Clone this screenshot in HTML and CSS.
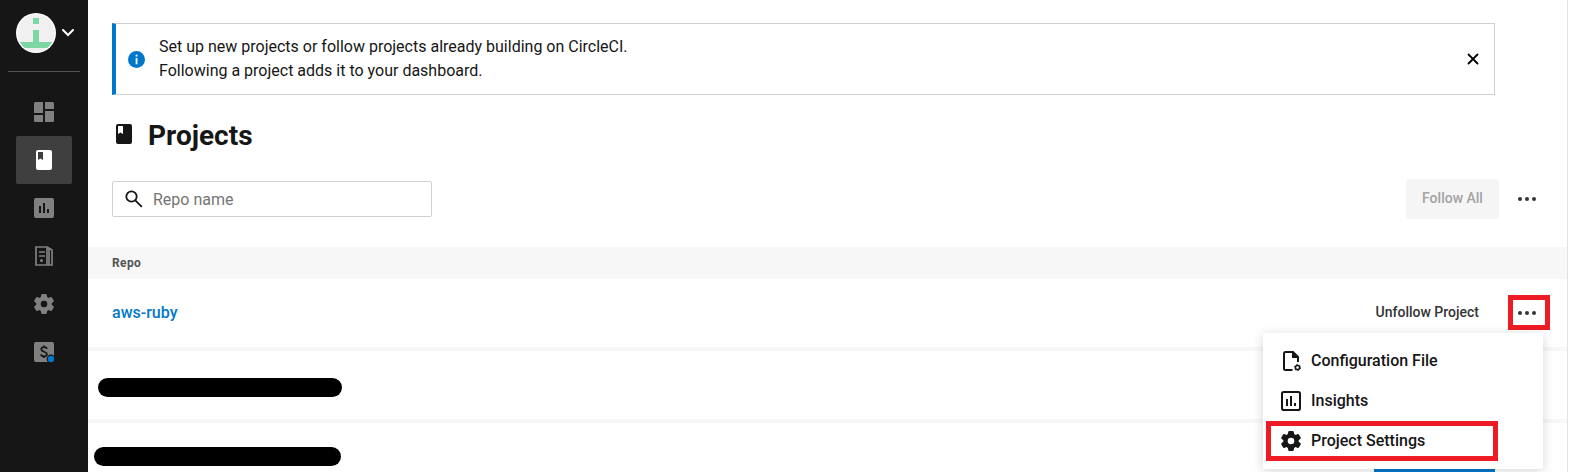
FILE: index.html
```html
<!DOCTYPE html>
<html lang="en">
<head>
<meta charset="utf-8">
<title>Projects</title>
<link rel="stylesheet" href="styles.css">
</head>
<body>
<div class="app">
  <nav class="sidebar">
    <div class="org">
      <svg class="avatar" viewBox="0 0 40 40"><defs><clipPath id="round"><circle cx="20" cy="20" r="18.6"/></clipPath></defs><circle cx="20" cy="20" r="20" fill="#fff"/><g clip-path="url(#round)"><path fill="#f0f0f0" d="M0 0h40v40H0z"/><path fill="#7dd7a3" d="M17 5h6v6h-6zM17 17h6v12h14v6H3v-6h14z"/></g></svg>
      <svg class="chevron" viewBox="0 0 12 8"><path d="M1 1l5 5 5-5" fill="none" stroke="#fff" stroke-width="2" stroke-linecap="round"/></svg>
    </div>
    <div class="rule"></div>
    <div class="nav-items">
      <a class="nav-item"><svg class="icon" viewBox="0 0 24 24"><path d="M3.500 2H11v11H2V3.500A1.500 1.500 0 0 1 3.500 2zM13 2h7.500A1.500 1.500 0 0 1 22 3.500V9h-9zM13 11h9v9.500a1.500 1.500 0 0 1-1.500 1.500H13zM2 15h9v7H3.500A1.500 1.500 0 0 1 2 20.500z"/></svg></a>
      <a class="nav-item active"><svg class="icon" viewBox="0 0 24 24"><path fill-rule="evenodd" d="M6 2h12a2 2 0 0 1 2 2v16a2 2 0 0 1-2 2H6a2 2 0 0 1-2-2V4a2 2 0 0 1 2-2zm0 2v8l2.500-1.500L11 12V4z"/></svg></a>
      <a class="nav-item"><svg class="icon" viewBox="0 0 24 24"><path fill-rule="evenodd" d="M4 2h16a2 2 0 0 1 2 2v16a2 2 0 0 1-2 2H4a2 2 0 0 1-2-2V4a2 2 0 0 1 2-2zm3 8v7h2v-7zm4-3v10h2V7zm4 6v4h2v-4z"/></svg></a>
      <a class="nav-item"><svg class="icon line" viewBox="0 0 24 24"><path d="M4 3h11v18H4zM15 3l5 3v15h-5M17 5v16M7 8h6M7 12h6"/><circle cx="9.500" cy="16.500" r=".7"/></svg></a>
      <a class="nav-item"><svg class="icon" viewBox="0 0 24 24"><path fill-rule="evenodd" d="M9.300 2.700Q9.500 2 10.200 2h3.600q.7 0 .9.700l.5 2.400 1.300.8 2.300-.8q.7-.2 1.100.4l1.800 3.100q.3.600-.2 1.100L19.700 11.300v1.400l1.800 1.600q.5.500.2 1.100l-1.800 3.100q-.4.600-1.100.4l-2.300-.8-1.300.8-.5 2.400q-.2.700-.9.700h-3.600q-.7 0-.9-.7l-.5-2.400-1.300-.8-2.300.8q-.7.200-1.100-.4l-1.800-3.100q-.3-.6.2-1.100l1.800-1.600v-1.400L2.500 9.700Q2 9.200 2.300 8.600l1.800-3.100q.4-.6 1.100-.4l2.300.8 1.300-.8zM12 8.700a3.300 3.300 0 1 0 0 6.600 3.300 3.300 0 0 0 0-6.600z"/></svg></a>
      <a class="nav-item"><svg class="icon" viewBox="0 0 24 24"><rect x="2" y="2" width="20" height="20" rx="2"/><path d="M14.700 9c0-1.300-1.200-1.800-2.700-1.800s-2.700.6-2.700 2.100c0 3 5.600 1.900 5.600 4.900 0 1.600-1.300 2.100-2.900 2.100s-2.900-.6-2.900-2M12 5.500V7M12 16.500V18" fill="none" stroke="#161616" stroke-width="1.800"/><circle cx="19" cy="19" r="4.400" fill="#161616"/><circle cx="19" cy="19" r="3.200" fill="#0078ca"/></svg></a>
    </div>
  </nav>
  <main class="main">
    <section class="banner">
      <svg class="info" viewBox="0 0 16 16"><circle cx="8" cy="8" r="8" fill="#0078ca"/><path d="M7.200 3.500h1.700v1.700H7.200zM7.200 6.500h1.700v6H7.200z" fill="#fff"/></svg>
      <p class="banner-text">Set up new projects or follow projects already building on CircleCI.<br>Following a project adds it to your dashboard.</p>
      <svg class="close" viewBox="0 0 12 12"><path d="M1.500 1.500l9 9M10.500 1.500l-9 9" stroke="#000" stroke-width="1.800" stroke-linecap="round"/></svg>
    </section>
    <header class="heading">
      <svg class="icon" viewBox="0 0 24 24"><path fill-rule="evenodd" d="M6 2h12a2 2 0 0 1 2 2v16a2 2 0 0 1-2 2H6a2 2 0 0 1-2-2V4a2 2 0 0 1 2-2zm0 2v8l2.500-1.500L11 12V4z"/></svg>
      <h1 class="title">Projects</h1>
    </header>
    <div class="toolbar">
      <div class="search">
        <svg class="glass" viewBox="0 0 18 18"><circle cx="6.500" cy="6.500" r="5.200"/><path d="M10.300 10.300l6.500 6.500"/></svg>
        <span>Repo name</span>
      </div>
      <div class="follow-all">Follow All</div>
      <svg class="dots" viewBox="0 0 18 4"><circle cx="2" cy="2" r="2"/><circle cx="9" cy="2" r="2"/><circle cx="16" cy="2" r="2"/></svg>
    </div>
    <div class="table-head">Repo</div>
    <div class="row">
      <a class="repo">aws-ruby</a>
      <span class="unfollow">Unfollow Project</span>
      <div class="more">
        <svg class="dots" viewBox="0 0 18 4"><circle cx="2" cy="2" r="2"/><circle cx="9" cy="2" r="2"/><circle cx="16" cy="2" r="2"/></svg>
        <div class="menu">
          <div class="menu-item"><svg class="icon" viewBox="0 0 24 24"><path d="M13.500 21H6.500A1.500 1.500 0 0 1 5 19.500v-15A1.500 1.500 0 0 1 6.500 3H14l5 5v5" fill="none" stroke="currentColor" stroke-width="2"/><path d="M13 2.500 19.500 9H13z"/><circle cx="18.500" cy="18.500" r="2.100" fill="none" stroke="currentColor" stroke-width="1.500"/><circle cx="18.500" cy="18.500" r="3.100" fill="none" stroke="currentColor" stroke-width="1" stroke-dasharray="1.500 1.746"/></svg>Configuration File</div>
          <div class="menu-item"><svg class="icon" viewBox="0 0 24 24"><rect x="3" y="3" width="18" height="18" rx="1.800" fill="none" stroke="currentColor" stroke-width="2"/><path d="M7 10h2v7H7zM11 7h2v10h-2zM15 14h2v3h-2z"/></svg>Insights</div>
          <div class="menu-item"><svg class="icon" viewBox="0 0 24 24"><path fill-rule="evenodd" d="M9.300 2.700Q9.500 2 10.200 2h3.600q.7 0 .9.700l.5 2.400 1.300.8 2.300-.8q.7-.2 1.100.4l1.800 3.100q.3.600-.2 1.100L19.700 11.300v1.400l1.800 1.600q.5.500.2 1.100l-1.800 3.100q-.4.600-1.100.4l-2.300-.8-1.300.8-.5 2.400q-.2.700-.9.700h-3.600q-.7 0-.9-.7l-.5-2.400-1.300-.8-2.300.8q-.7.200-1.100-.4l-1.800-3.100q-.3-.6.2-1.100l1.800-1.600v-1.400L2.500 9.700Q2 9.200 2.300 8.600l1.800-3.100q.4-.6 1.100-.4l2.300.8 1.300-.8zM12 8.700a3.300 3.300 0 1 0 0 6.600 3.300 3.300 0 0 0 0-6.600z"/></svg>Project Settings<span class="mark mark-settings"></span></div>
        </div>
        <span class="mark mark-more"></span>
      </div>
    </div>
    <div class="row hidden-row"><span class="redacted"></span></div>
    <div class="row hidden-row last"><span class="redacted wide"></span><span class="setup"></span></div>
  </main>
</div>
</body>
</html>
```
FILE: styles.css
```css
* { box-sizing: border-box; }
body { margin: 0; background: #fff; color: #161616; font-family: Roboto, sans-serif; font-size: 16px; }
.app { display: flex; height: 472px; overflow: hidden; }
svg { display: block; flex: none; }
.sidebar { width: 88px; flex: none; background: #161616; padding-top: 13px; }
.org { display: flex; align-items: center; gap: 6px; padding-left: 16px; }
.avatar { width: 40px; height: 40px; }
.chevron { width: 12px; height: 8px; }
.rule { height: 1px; margin: 18px 8px 16px; background: #555; }
.nav-items { display: flex; flex-direction: column; padding: 0 16px; }
.nav-item { height: 48px; display: flex; align-items: center; justify-content: center; border-radius: 2px; color: #808080; }
.active { background: #3f3f3f; color: #fff; }
.icon { width: 24px; height: 24px; fill: currentColor; }
.nav-item .line { fill: none; stroke: currentColor; stroke-width: 1.7; }
.main { width: 1480px; flex: none; padding-top: 23px; border-right: 1px solid #e3e3e3; }
.banner { display: flex; align-items: center; width: 1383px; height: 72px; margin-left: 24px; padding: 0 15px 0 12px; border: 1px solid #d0d0d0; border-left: 4px solid #0078ca; }
.info { width: 17px; height: 17px; }
.banner-text { flex: 1; margin: 0 0 0 14px; line-height: 24px; }
.close { width: 12px; height: 12px; }
.heading { display: flex; align-items: center; height: 40px; margin: 21px 0 0 24px; gap: 12px; }
.heading .icon { margin-top: -4px; }
.title { margin: 0; font-size: 28px; line-height: 40px; font-weight: 700; }
.toolbar { display: flex; align-items: center; height: 40px; margin-top: 23px; padding: 0 31px 0 24px; }
.search { display: flex; align-items: center; gap: 10px; width: 320px; height: 36px; padding-left: 12px; border: 1px solid #d0d0d0; border-radius: 2px; color: #757575; }
.glass { width: 18px; height: 18px; fill: none; stroke: #161616; stroke-width: 1.800; }
.follow-all { width: 93px; height: 40px; margin-left: auto; border-radius: 4px; background: #f5f5f5; color: #a3a3a3; font-size: 14px; font-weight: 500; line-height: 38px; text-align: center; }
.dots { width: 18px; height: 4px; fill: #343434; }
.toolbar .dots { margin-left: 19px; }
.table-head { height: 32px; margin-top: 28px; padding-left: 24px; background: #f7f7f7; color: #555; font-size: 12px; line-height: 32px; font-weight: 700; letter-spacing: .4px; }
.row { display: flex; align-items: center; height: 72px; padding: 0 31px 0 24px; border-bottom: 4px solid #f7f7f7; }
.repo { padding-bottom: 2px; color: #0078ca; font-weight: 500; }
.unfollow { margin-left: auto; padding-bottom: 2px; color: #343434; font-size: 14px; font-weight: 500; }
.more { position: relative; margin-left: 39px; }
.menu { position: absolute; top: 22px; left: -255px; z-index: 1; width: 280px; height: 136px; padding: 7px 0 0 16px; border-radius: 2px; background: #fff; box-shadow: 0 2px 12px rgba(0, 0, 0, .16); }
.menu-item { position: relative; display: flex; align-items: center; gap: 8px; height: 40px; font-weight: 500; }
.menu-item .icon { margin-top: 2px; }
.mark { position: absolute; border: 5px solid #ed1c24; }
.mark-more { top: -16px; left: -10px; width: 42px; height: 35px; }
.mark-settings { top: 1px; left: -13px; width: 232px; height: 40px; }
.hidden-row { align-items: flex-start; padding: 27px 72px 0 10px; }
.last { padding: 24px 72px 0 6px; border: 0; }
.redacted { width: 244px; height: 19px; border-radius: 9.5px; background: #000; }
.wide { width: 247px; }
.setup { width: 121px; height: 40px; margin: 22px 0 0 auto; background: #0078ca; }
```
